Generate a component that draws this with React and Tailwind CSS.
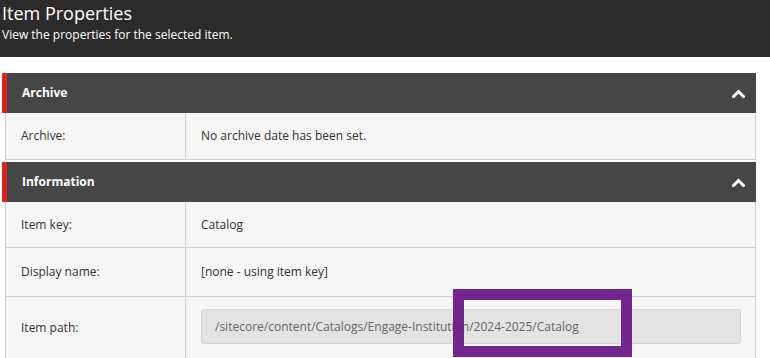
export default function App() {
  const font = { fontFamily: '"Open Sans", "Noto Sans", sans-serif' };
  const Chevron = () => (
    <svg width="13" height="9" viewBox="0 0 13 9" className="block">
      <path d="M1.5 7.5 L6.5 2.5 L11.5 7.5" fill="none" stroke="#fff" strokeWidth="3" strokeLinecap="square" />
    </svg>
  );
  const SectionHeader = ({ title }) => (
    <div className="flex h-[40px] items-center ml-[2px] w-[754px] bg-[#464646] border-l-[5px] border-[#d9261c]">
      <span className="flex-1 pl-[15px] text-[12px] font-bold text-white">{title}</span>
      <span className="pr-[11px]"><Chevron /></span>
    </div>
  );
  const Row = ({ label, children, h = "h-[46px]" }) => (
    <div className={`flex ${h} border-b border-[#cfcfcf]`}>
      <div className="w-[180px] shrink-0 flex items-center pl-[15px] border-r border-[#cfcfcf] text-[12px] text-[#333]">{label}</div>
      <div className="flex-1 flex items-center pl-[15px] pr-[14px] text-[12px] text-[#333]">{children}</div>
    </div>
  );
  return (
    <div className="w-[770px] h-[358px] overflow-hidden bg-white relative" style={font}>
      <div className="h-[57px] bg-[#2b2b2b] pl-[2px] pt-[0px]">
        <div className="text-[18px] leading-[26px] text-white">Item Properties</div>
        <div className="text-[12px] leading-[16px] text-white mt-[1px]">View the properties for the selected item.</div>
      </div>
      <div className="pt-[16px]">
        <SectionHeader title="Archive" />
        <div className="ml-[5px] w-[751px] border-x border-[#cfcfcf] bg-[#f6f6f6]">
          <Row label="Archive:" h="h-[47px]">No archive date has been set.</Row>
        </div>
        <div className="h-[2px]" />
        <SectionHeader title="Information" />
        <div className="ml-[5px] w-[751px] border-x border-[#cfcfcf] bg-[#f6f6f6]">
          <Row label="Item key:" h="h-[46px]">Catalog</Row>
          <Row label="Display name:" h="h-[49px]">[none - using item key]</Row>
          <Row label="Item path:" h="h-[62px]">
            <div className="w-full h-[35px] mt-[-2px] flex items-center pl-[13px] bg-[#e3e3e3] border border-[#d3d3d3] rounded-[3px] text-[#666]">
              /sitecore/content/Catalogs/Engage-Institution/2024-2025/Catalog
            </div>
          </Row>
        </div>
      </div>
      <div className="absolute left-[453px] top-[289px] w-[179px] h-[68px] border-[11px] border-[#6a1a88]/95" />
    </div>
  );
}
